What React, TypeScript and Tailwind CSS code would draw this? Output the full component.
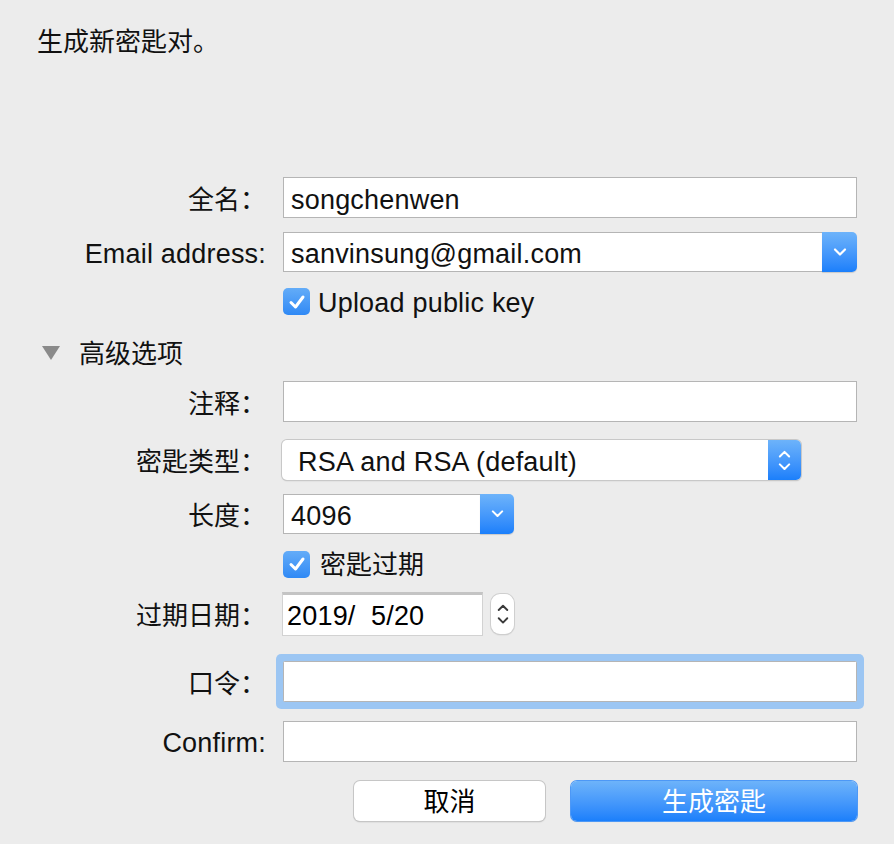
import React from "react";

const FONT = { fontFamily: '"Liberation Sans", "Noto Sans CJK SC", sans-serif' };

// latin text in the reference is a bit wider than the CJK labels
const LATIN = "text-[27px] tracking-[0.2px]";

function Label({ children }: { children?: React.ReactNode }) {
  return <div className="w-[283px] shrink-0 pr-[17px] pt-[4px] text-right leading-none">{children}</div>;
}

function Check() {
  return (
    <div className="flex h-[27px] w-[27px] items-center justify-center rounded-[5px] bg-gradient-to-b from-[#63acf8] to-[#2f89f5]">
      <svg width="18" height="16" viewBox="0 0 18 16">
        <polyline points="3,8.5 7.5,13 15,3" fill="none" stroke="#fff" strokeWidth="3" strokeLinecap="round" strokeLinejoin="round" />
      </svg>
    </div>
  );
}

function Chevron({ up = false, color = "#fff", w = 14 }: { up?: boolean; color?: string; w?: number }) {
  return (
    <svg width={w} height={w * 0.6} viewBox="0 0 14 8.4">
      <polyline
        points={up ? "2,7 7,2 12,7" : "2,1.5 7,6.5 12,1.5"}
        fill="none"
        stroke={color}
        strokeWidth="2.2"
        strokeLinecap="round"
        strokeLinejoin="round"
      />
    </svg>
  );
}

function TextField({ value = "", focus = false }: { value?: string; focus?: boolean }) {
  return (
    <div
      className={`flex h-[41px] flex-1 items-center border border-[#b5b5b5] bg-white pl-[7px] pt-[5px] ${LATIN} ${
        focus ? "rounded-[1.5px] shadow-[0_0_0_7px_#9cc6f3]" : ""
      }`}
    >
      {value}
    </div>
  );
}

export default function App() {
  return (
    <div className="h-[844px] w-[894px] bg-[#ececec] text-[26px] text-[#111]" style={FONT}>
      <div className="pl-[37px] pt-[27px] leading-[30px]">生成新密匙对。</div>

      <div className="mt-[120px] flex flex-col pr-[37px]">
        <div className="flex items-center">
          <Label>全名：</Label>
          <TextField value="songchenwen" />
        </div>

        <div className="mt-[14px] flex h-[40px] items-center">
          <Label>
            <span className={LATIN}>Email address:</span>
          </Label>
          <div className="flex h-full flex-1">
            <div className={`flex flex-1 items-center border border-r-0 border-[#b5b5b5] bg-white pl-[7px] pt-[5px] ${LATIN}`}>
              sanvinsung@gmail.com
            </div>
            <div className="flex w-[35px] items-center justify-center rounded-r-[5px] bg-gradient-to-b from-[#6db3fa] to-[#1a7ffb] shadow-[0_1px_1px_rgba(0,0,0,0.15)]">
              <Chevron />
            </div>
          </div>
        </div>

        <div className="mt-[16px] flex h-[27px] items-center">
          <Label />
          <Check />
          <span className={`ml-[8px] pt-[4px] leading-none ${LATIN}`}>Upload public key</span>
        </div>

        <div className="mt-[25px] flex h-[26px] items-center pl-[42px]">
          <svg width="18" height="14" viewBox="0 0 18 14">
            <polygon points="0,0 18,0 9,14" fill="#8a8a8a" />
          </svg>
          <span className="ml-[19px] pt-[2px] leading-none">高级选项</span>
        </div>

        <div className="mt-[15px] flex items-center">
          <Label>注释：</Label>
          <TextField />
        </div>

        <div className="mt-[18px] flex h-[40px] items-center">
          <div className="w-[282px] shrink-0 pr-[16px] pt-[4px] text-right leading-none">密匙类型：</div>
          <div className="flex h-full w-[519px] overflow-hidden rounded-[5px] bg-white shadow-[0_0_0_1px_#c8c8c8,0_1px_1.5px_rgba(0,0,0,0.2)]">
            <div className={`flex flex-1 items-center pl-[16px] pt-[4px] ${LATIN}`}>RSA and RSA (default)</div>
            <div className="flex w-[33px] flex-col items-center justify-center gap-[5px] bg-gradient-to-b from-[#6db3fa] to-[#1a7ffb]">
              <Chevron up w={13} />
              <Chevron w={13} />
            </div>
          </div>
        </div>

        <div className="mt-[14px] flex h-[40px] items-center">
          <Label>长度：</Label>
          <div className="flex h-full w-[231px]">
            <div className={`flex flex-1 items-center border border-r-0 border-[#b5b5b5] bg-white pl-[7px] pt-[5px] ${LATIN}`}>4096</div>
            <div className="flex w-[34px] items-center justify-center rounded-r-[5px] bg-gradient-to-b from-[#6db3fa] to-[#1a7ffb] shadow-[0_1px_1px_rgba(0,0,0,0.15)]">
              <Chevron w={13} />
            </div>
          </div>
        </div>

        <div className="mt-[17px] flex h-[26px] items-center">
          <Label />
          <Check />
          <span className="ml-[10px] pt-[2px] leading-none">密匙过期</span>
        </div>

        <div className="mt-[15px] flex h-[44px] items-center">
          <div className="w-[282px] shrink-0 pr-[16px] pt-[4px] text-right leading-none">过期日期：</div>
          <div className={`flex h-full w-[201px] items-center border border-t-[3px] border-[#d2d2d2] border-t-[#c4c4c4] bg-white pl-[4px] pt-[3px] text-black ${LATIN}`}>
            2019/&nbsp;&nbsp;5/20
          </div>
          <div className="ml-[8px] flex h-[40px] w-[23px] flex-col items-center justify-center gap-[6px] rounded-[9px] bg-white shadow-[0_0_0_1px_#cfcfcf,0_1px_1.5px_rgba(0,0,0,0.2)]">
            <Chevron up color="#3a3a3a" w={12} />
            <Chevron color="#3a3a3a" w={12} />
          </div>
        </div>

        <div className="mt-[25px] flex items-center">
          <Label>口令：</Label>
          <TextField focus />
        </div>

        <div className="mt-[19px] flex items-center">
          <Label>
            <span className={LATIN}>Confirm:</span>
          </Label>
          <TextField />
        </div>

        <div className="mt-[19px] flex h-[40px] justify-end gap-[26px]">
          <button className="w-[191px] rounded-[6px] bg-white pt-[2px] leading-none text-black shadow-[0_0_0_1px_#c6c6c6,0_1px_1.5px_rgba(0,0,0,0.25)]">
            取消
          </button>
          <button className="w-[286px] rounded-[6px] bg-gradient-to-b from-[#6db3fa] to-[#1a7ffb] pt-[2px] leading-none text-white shadow-[0_0_0_1px_#4d98f6,0_1px_1px_rgba(0,0,0,0.15)]">
            生成密匙
          </button>
        </div>
      </div>
    </div>
  );
}
